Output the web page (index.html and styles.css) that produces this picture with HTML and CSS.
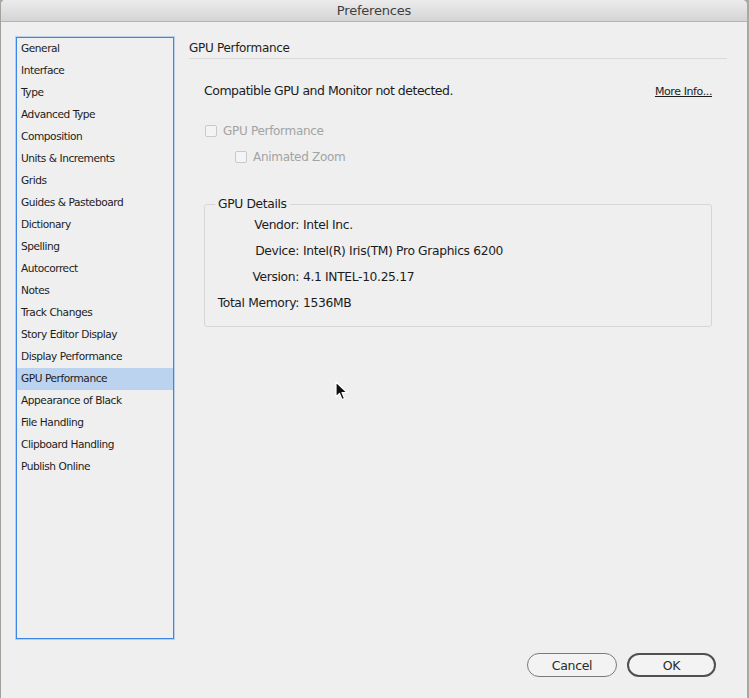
FILE: index.html
```html
<!DOCTYPE html>
<html>
<head>
<meta charset="utf-8">
<title>Preferences</title>
<link rel="stylesheet" href="styles.css">
</head>
<body>
<div class="window">
  <div class="titlebar">Preferences</div>
  <div class="content">
    <ul class="sidebar">
      <li>General</li>
      <li>Interface</li>
      <li>Type</li>
      <li>Advanced Type</li>
      <li>Composition</li>
      <li>Units &amp; Increments</li>
      <li>Grids</li>
      <li>Guides &amp; Pasteboard</li>
      <li>Dictionary</li>
      <li>Spelling</li>
      <li>Autocorrect</li>
      <li>Notes</li>
      <li>Track Changes</li>
      <li>Story Editor Display</li>
      <li>Display Performance</li>
      <li class="selected">GPU Performance</li>
      <li>Appearance of Black</li>
      <li>File Handling</li>
      <li>Clipboard Handling</li>
      <li>Publish Online</li>
    </ul>
    <div class="main">
      <div class="heading">GPU Performance</div>
      <div class="message">
        <span>Compatible GPU and Monitor not detected.</span>
        <a class="more">More Info...</a>
      </div>
      <label class="check"><span class="box"></span>GPU Performance</label>
      <label class="check sub"><span class="box"></span>Animated Zoom</label>
      <fieldset class="details">
        <legend>GPU Details</legend>
        <div class="grid">
          <span class="k">Vendor:</span><span class="v">Intel Inc.</span>
          <span class="k">Device:</span><span class="v">Intel(R) Iris(TM) Pro Graphics 6200</span>
          <span class="k">Version:</span><span class="v">4.1 INTEL-10.25.17</span>
          <span class="k">Total Memory:</span><span class="v">1536MB</span>
        </div>
      </fieldset>
    </div>
  </div>
  <div class="footer">
    <button class="btn">Cancel</button>
    <button class="btn default">OK</button>
  </div>
  <svg class="cursor" width="14" height="20" viewBox="0 0 14 20">
    <path d="M1 1 L1 16 L4.5 12.5 L7 18.5 L9.5 17.5 L7 11.5 L12 11.5 Z" fill="#111" stroke="#fff" stroke-width="1.2" stroke-linejoin="round"/>
  </svg>
</div>
</body>
</html>
```
FILE: styles.css
```css
* { box-sizing: border-box; }
html, body { margin: 0; padding: 0; }
body {
  background: #a9a8a3;
  width: 749px;
  height: 698px;
  overflow: hidden;
  font-family: "DejaVu Sans", "Noto Sans", sans-serif;
  color: #1c1c1c;
}
.window {
  position: relative;
  width: 747px;
  height: 698px;
  background: #efefef;
  border-left: 1px solid #a3a19c;
  border-radius: 5px 5px 0 0;
  overflow: hidden;
  display: flex;
  flex-direction: column;
}
.titlebar {
  height: 22px;
  line-height: 21px;
  text-align: center;
  font-size: 13px;
  color: #3f3f3f;
  background: linear-gradient(#ececec, #d4d4d4);
  border-bottom: 1px solid #b4b4b4;
  letter-spacing: -0.2px;
}
.content {
  display: flex;
  padding: 15px 0 0 15px;
  height: 617px;
}
.sidebar {
  list-style: none;
  margin: 0;
  padding: 0;
  width: 158px;
  height: 602px;
  border: 1px solid #3b86e6;
  box-shadow: 0 0 0 1px rgba(59, 134, 230, 0.3);
  font-size: 10.6px;
  letter-spacing: -0.45px;
}
.sidebar li {
  height: 22px;
  line-height: 21px;
  padding-left: 4px;
}
.sidebar li.selected {
  background: #bcd3ef;
}
.main {
  width: 538px;
  margin-left: 15px;
  display: flex;
  flex-direction: column;
}
.heading {
  margin-top: 3px;
  font-size: 12px;
  line-height: 16px;
  padding-bottom: 2px;
  border-bottom: 1px solid #d9d9d9;
  letter-spacing: -0.3px;
}
.message {
  display: flex;
  justify-content: space-between;
  align-items: baseline;
  margin: 24px 15px 0 15px;
  font-size: 12.5px;
  line-height: 16px;
  letter-spacing: -0.5px;
}
.more {
  font-size: 11px;
  text-decoration: underline;
  letter-spacing: -0.4px;
}
.check {
  display: flex;
  align-items: center;
  gap: 6px;
  margin: 23px 0 0 16px;
  font-size: 12px;
  line-height: 16px;
  color: #a3a3a3;
  letter-spacing: -0.3px;
}
.check.sub {
  margin: 10px 0 0 46px;
}
.box {
  width: 12px;
  height: 12px;
  border: 1px solid #c9c9c9;
  border-radius: 2px;
  background: #f4f4f4;
}
.details {
  margin: 31px 16px 0 15px;
  padding: 5px 0 15px 0;
  border: 1px solid #d6d6d6;
  border-radius: 3px;
  width: 508px;
  font-size: 12.3px;
  letter-spacing: -0.35px;
}
.details legend {
  margin-left: 10px;
  padding: 0 3px;
  line-height: 16px;
}
.grid {
  display: grid;
  grid-template-columns: 94px 1fr;
  column-gap: 4px;
  row-gap: 10px;
  line-height: 16px;
}
.k { text-align: right; }
.footer {
  display: flex;
  justify-content: flex-end;
  gap: 10px;
  padding: 14px 31px 0 0;
}
.btn {
  width: 90px;
  height: 24px;
  border-radius: 12px;
  border: 1px solid #7a7a7a;
  background: #f3f3f3;
  font-family: "DejaVu Sans", "Noto Sans", sans-serif;
  font-size: 12.5px;
  color: #2a2a2a;
  letter-spacing: -0.3px;
  padding: 0;
}
.btn.default {
  border: 2px solid #505050;
  width: 89px;
}
.cursor {
  position: absolute;
  left: 334px;
  top: 381px;
}
```
